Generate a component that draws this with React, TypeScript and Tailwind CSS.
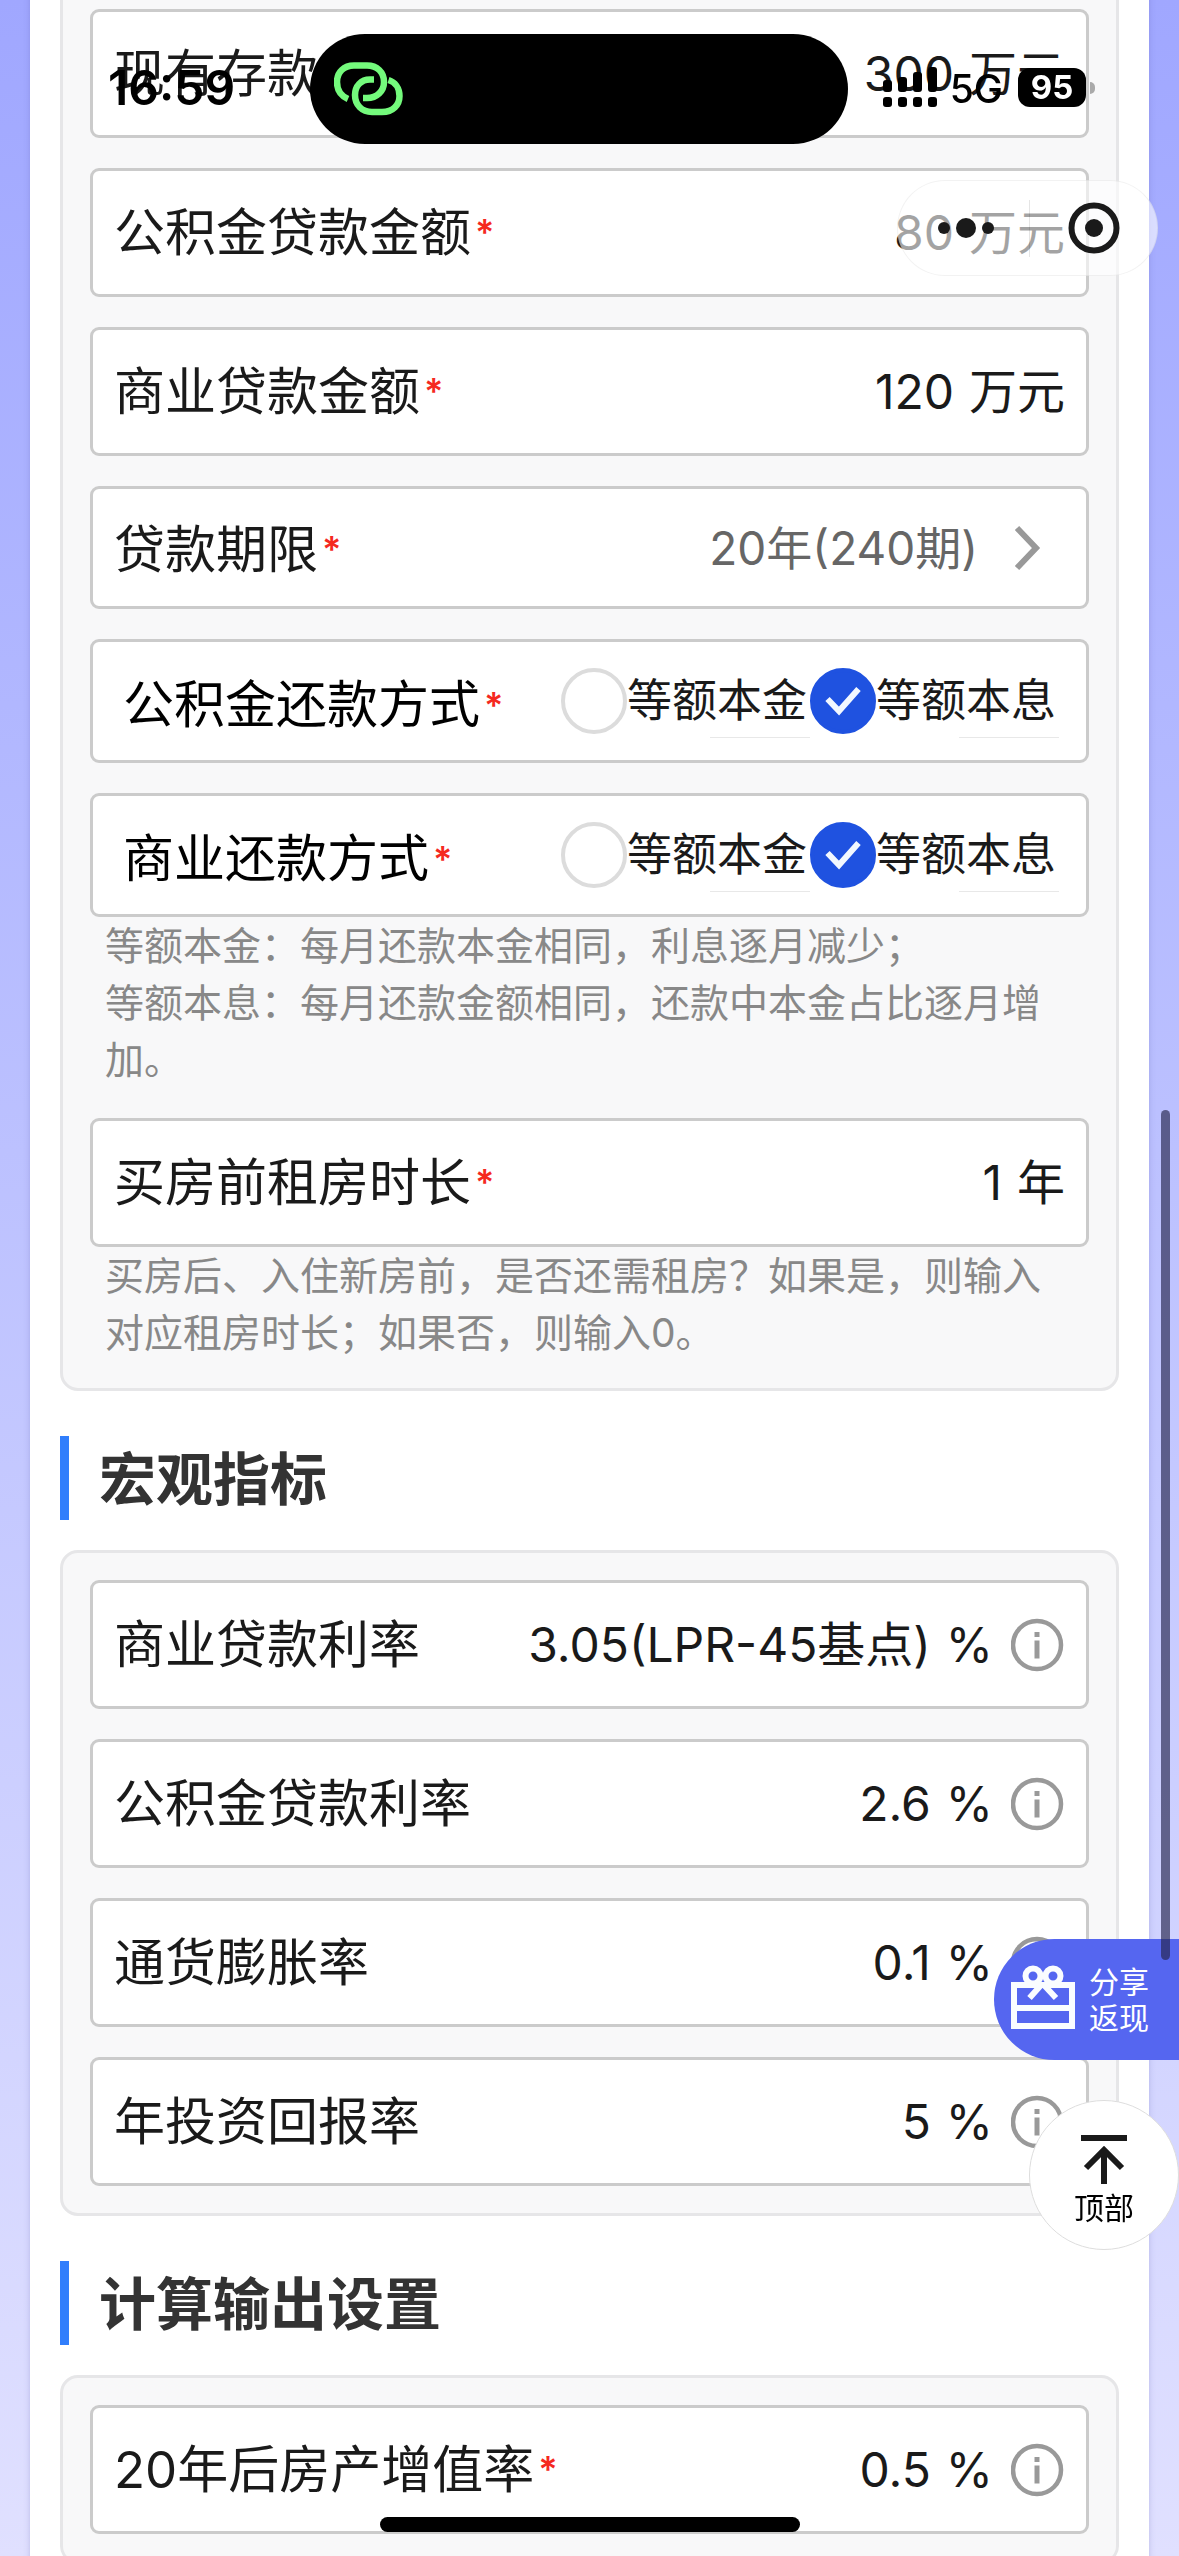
import React, { useId, useState } from 'react';

function Shell({
  children,
  height = 'h-[129px]',
  padding = 'px-[21px]',
}: {
  children: React.ReactNode;
  height?: string;
  padding?: string;
}) {
  return (
    <div className={`flex items-center justify-between rounded-[9px] border-[3px] border-[#cbcbcb] bg-white ${height} ${padding}`}>
      {children}
    </div>
  );
}

function Star() {
  return <span className="ml-[4px] text-[36px] leading-[39px] font-semibold text-[#f5291f]">*</span>;
}

function InfoButton() {
  return (
    <button type="button" aria-label="说明" className="ml-[18px] shrink-0">
      <svg width="54" height="54" viewBox="0 0 54 54" fill="none">
        <circle cx="26" cy="27" r="24" stroke="#999" strokeWidth="4.5" />
        <rect x="23.500" y="14" width="5" height="5" fill="#999" />
        <rect x="23.500" y="22.500" width="5" height="18" fill="#999" />
      </svg>
    </button>
  );
}

type FieldProps = { label: string; value: string; unit: string; required?: boolean; info?: boolean };

function Field({ label, value, unit, required, info }: FieldProps) {
  const id = useId();
  const [text, setText] = useState(value);
  return (
    <Shell>
      <label htmlFor={id} className="flex shrink-0 items-center text-[51px] leading-[72px] text-[#1a1a1a]">
        {label}
        {required && <Star />}
      </label>
      <div className="flex min-w-0 flex-1 items-center text-[48px] leading-[72px] text-[#1a1a1a]">
        <input
          id={id}
          value={text}
          onChange={(e) => setText(e.target.value)}
          className="h-[72px] w-0 min-w-0 flex-1 bg-transparent text-right outline-none"
        />
        <span className="ml-[15px] shrink-0">{unit}</span>
        {info && <InfoButton />}
      </div>
    </Shell>
  );
}

function Choice({ name, label, checked, onPick }: { name: string; label: string; checked: boolean; onPick: () => void }) {
  return (
    <label className="flex items-center text-[45px] leading-[66px] text-[#1a1a1a]">
      <span className="relative flex size-[66px] items-center justify-center">
        <input
          type="radio"
          name={name}
          checked={checked}
          onChange={onPick}
          className="peer absolute inset-0 m-0 size-full appearance-none rounded-full border-[4px] border-[#dcdcdc] bg-white checked:border-[#1f52e0] checked:bg-[#1f52e0]"
        />
        <svg className="relative hidden peer-checked:block" width="36" height="30" viewBox="0 0 36 30" fill="none">
          <path d="M2.500 13 L14 25 L33.500 3" stroke="#f2f8ff" strokeWidth="6" />
        </svg>
      </span>
      <span className="relative pr-[3px] after:absolute after:right-0 after:-bottom-1 after:h-px after:w-25 after:bg-[#e8e8e8]">
        {label}
      </span>
    </label>
  );
}

function RadioRow({ label }: { label: string }) {
  const name = useId();
  const [picked, setPicked] = useState('等额本息');
  return (
    <fieldset>
      <Shell height="h-[124px]" padding="pl-[30px] pr-[27px]">
        <legend className="contents">
          <span className="flex items-center pt-2 text-[51px] leading-[72px] text-black">
            {label}
            <Star />
          </span>
        </legend>
        <div className="flex">
          {['等额本金', '等额本息'].map((o) => (
            <Choice key={o} name={name} label={o} checked={picked === o} onPick={() => setPicked(o)} />
          ))}
        </div>
      </Shell>
    </fieldset>
  );
}

function Note({ children }: { children: React.ReactNode }) {
  return <p className="pl-[15px] pr-[36px] text-[39px] leading-[57px] text-[#888]">{children}</p>;
}

function Heading({ children }: { children: React.ReactNode }) {
  return (
    <h2 className="mt-[45px] mb-[30px] flex h-[84px] items-center border-l-[9px] border-[#317efc] pt-1 pl-[30px] text-[57px] font-bold text-[#333]">
      {children}
    </h2>
  );
}

function Panel({ children }: { children: React.ReactNode }) {
  return (
    <section className="flex flex-col gap-[30px] rounded-[18px] border-[3px] border-[#e6e6e8] bg-[#f8f8f9] p-[27px]">
      {children}
    </section>
  );
}

function StatusBar() {
  return (
    <div className="fixed inset-x-0 top-0 flex h-[150px]">
      <span className="absolute top-[60px] left-[108px] text-[48px] leading-[56px] font-semibold text-black">16:59</span>
      <div className="absolute top-[34px] left-[310px] h-[110px] w-[538px] rounded-full bg-black pt-[28px] pl-[24px]">
        <svg width="69" height="54" viewBox="0 0 69 54" fill="none" stroke="#74fa7c" strokeWidth="6.5">
          <path d="M14 37 C7 34 3 28 3 20 C3 10 10 3.500 20 3.500 H33 C43 3.500 50 10 50 20 C50 29 43 36 33 36 H29" />
          <path d="M40 17.500 H36 C27 17.500 21 24 21 33 C21 43 28 50 38 50 H48 C59 50 65.500 43 65.500 34 C65.500 26 61 20 54.500 18" />
        </svg>
      </div>
      <svg className="absolute top-[66px] right-[239px]" width="58" height="42" viewBox="0 0 58 42" aria-hidden="true">
        <rect x="1" y="14" width="9" height="12" rx="3" />
        <rect x="16" y="11" width="9" height="15" rx="3" />
        <rect x="31" y="6" width="9" height="20" rx="3" />
        <rect x="46" y="1" width="9" height="25" rx="3" />
        <rect x="1" y="31" width="9" height="10" rx="3" />
        <rect x="16" y="31" width="9" height="10" rx="3" />
        <rect x="31" y="31" width="9" height="10" rx="3" />
        <rect x="46" y="31" width="9" height="10" rx="3" />
      </svg>
      <span className="absolute top-[65px] right-[176px] text-[39px] leading-[48px] font-medium text-black">5G</span>
      <div className="absolute top-[68px] right-[93px] flex h-[39px] w-[68px] items-center justify-center rounded-[12px] bg-black text-[33px] leading-[39px] font-bold text-white">
        95
      </div>
      <div className="absolute top-[82px] right-[84px] h-[12px] w-[5px] rounded-r-full bg-[#aaa]" />
    </div>
  );
}

function Capsule() {
  return (
    <div className="fixed top-[180px] right-[21px] flex h-[96px] w-[261px] items-center rounded-full border border-black/5 bg-white/60 pl-[4px]">
      <button type="button" aria-label="更多" className="flex h-full flex-1 items-center justify-center">
        <svg width="58" height="22" viewBox="0 0 58 22" fill="#1a1a1a">
          <circle cx="7" cy="11" r="6" />
          <circle cx="29" cy="11" r="10" />
          <circle cx="51" cy="11" r="6" />
        </svg>
      </button>
      <span className="h-[57px] w-px bg-black/10" />
      <button type="button" aria-label="关闭" className="flex h-full flex-1 items-center justify-center">
        <svg width="52" height="52" viewBox="0 0 52 52" fill="none">
          <circle cx="26" cy="26" r="22.500" stroke="#1a1a1a" strokeWidth="6" />
          <circle cx="26" cy="26" r="9" fill="#1a1a1a" />
        </svg>
      </button>
    </div>
  );
}

export default function App() {
  return (
    <div className="h-screen overflow-hidden bg-linear-to-b from-[#a0a7ff] to-[#e0e0ff] px-[30px] font-['Inter','Noto_Sans_CJK_SC',sans-serif]">
      <main className="-mt-[21px] bg-white px-[30px] shadow-[0_0_6px_rgba(80,80,160,0.25)]">
        <Panel>
          <Field label="现有存款" value="300" unit="万元" required />
          <Field label="公积金贷款金额" value="80" unit="万元" required />
          <Field label="商业贷款金额" value="120" unit="万元" required />
          <Shell height="h-[123px]">
            <span className="flex items-center pt-1 text-[51px] leading-[72px] text-[#1a1a1a]">
              贷款期限
              <Star />
            </span>
            <button type="button" aria-label="贷款期限" className="flex items-center pr-[24px] text-[46px] leading-[72px] text-[#666]">
              20年(240期)
              <svg className="ml-[36px]" width="27" height="46" viewBox="0 0 27 46" fill="none">
                <path d="M3 3 L22 23 L3 43" stroke="#999" strokeWidth="6" />
              </svg>
            </button>
          </Shell>
          <RadioRow label="公积金还款方式" />
          <div>
            <RadioRow label="商业还款方式" />
            <Note>
              等额本金：每月还款本金相同，利息逐月减少；
              <br />
              等额本息：每月还款金额相同，还款中本金占比逐月增加。
            </Note>
          </div>
          <div>
            <Field label="买房前租房时长" value="1" unit="年" required />
            <Note>买房后、入住新房前，是否还需租房？如果是，则输入对应租房时长；如果否，则输入0。</Note>
          </div>
        </Panel>

        <Heading>宏观指标</Heading>
        <Panel>
          <Field label="商业贷款利率" value="3.05(LPR-45基点)" unit="%" info />
          <Field label="公积金贷款利率" value="2.6" unit="%" info />
          <Field label="通货膨胀率" value="0.1" unit="%" info />
          <Field label="年投资回报率" value="5" unit="%" info />
        </Panel>

        <Heading>计算输出设置</Heading>
        <Panel>
          <Field label="20年后房产增值率" value="0.5" unit="%" required info />
        </Panel>
      </main>

      <button
        type="button"
        className="fixed top-[1939px] right-0 flex h-[121px] w-[185px] items-center rounded-l-full bg-[#5566f0] pl-[17px] text-left text-[30px] leading-[36px] text-white"
      >
        <svg className="mb-[6px]" width="64" height="66" viewBox="0 0 64 66" fill="none" stroke="#fafcff" strokeWidth="6">
          <rect x="3" y="21" width="58" height="41" />
          <path d="M3 44 H61" />
          <circle cx="22" cy="12" r="7.500" />
          <circle cx="42" cy="12" r="7.500" />
          <path d="M31 20 L18.500 34 M32 20 L45 34" />
        </svg>
        <span className="ml-[14px] w-[60px]">分享返现</span>
      </button>
      <div className="fixed top-[1110px] right-[9px] h-[850px] w-[9px] rounded-full bg-[#25254c]/65" />
      <button
        type="button"
        className="fixed top-[2100px] right-0 flex size-[150px] flex-col items-center rounded-full border border-[#ddd] bg-white pt-[33px] text-[30px] leading-[44px] text-black"
      >
        <svg className="shrink-0" width="48" height="52" viewBox="0 0 48 52" fill="none" stroke="#1a1a1a" strokeWidth="6">
          <path d="M1 4 H47 M24 50 V16 M6 34 L24 16 L42 34" />
        </svg>
        顶部
      </button>

      <StatusBar />
      <Capsule />
      <div className="fixed bottom-[24px] left-1/2 h-[15px] w-[420px] -translate-x-1/2 rounded-full bg-black" />
    </div>
  );
}
